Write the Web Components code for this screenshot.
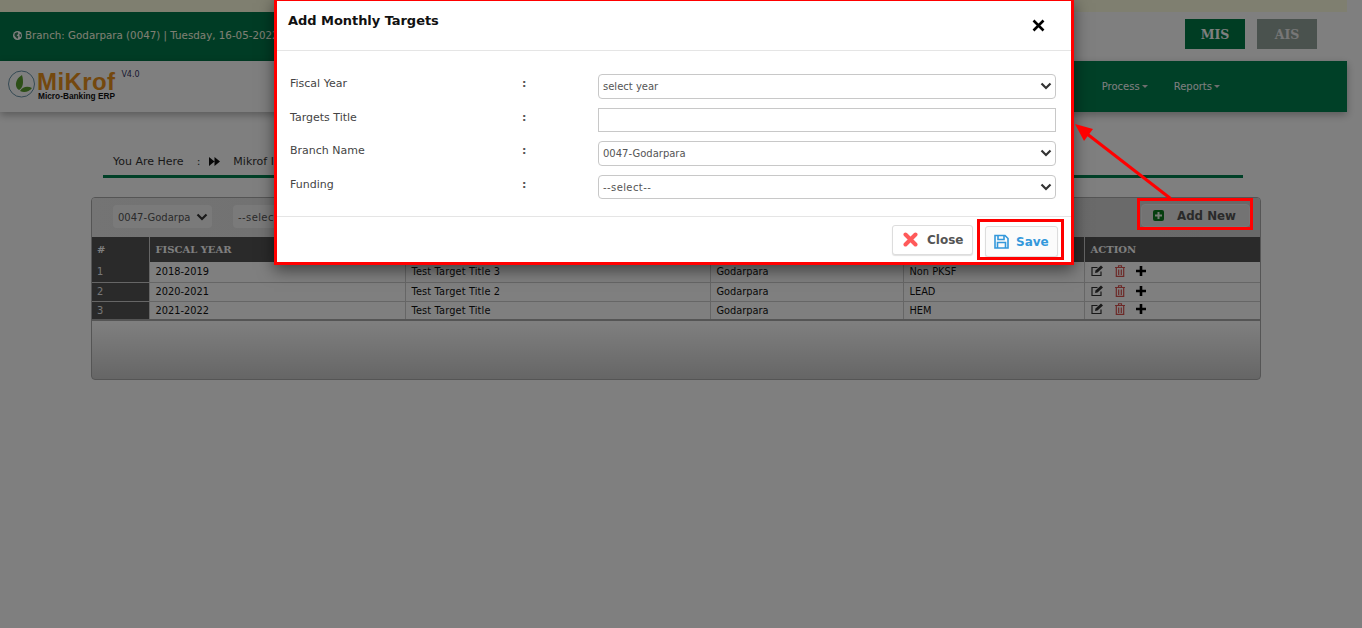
<!DOCTYPE html>
<html lang="en">
<head>
<meta charset="utf-8">
<title>Add Monthly Targets</title>
<style>
html,body{margin:0;padding:0;height:628px;overflow:hidden;background:#fff;font-family:"DejaVu Sans",Verdana,sans-serif;color:#333}
</style>
</head>
<body>
<mk-app></mk-app>

<template id="t-app">
<style>
:host{display:block;position:relative;width:1362px;height:628px;overflow:hidden}
main{display:flex;flex-direction:column;width:1347px}
.strip{height:12px;background:#ffffe0}
mk-breadcrumb{margin:39px 0 0 103px;width:1140px}
mk-panel{margin:19px 0 0 91px;width:1170px}
.veil{position:absolute;inset:0;background:rgba(0,0,0,.5)}
mk-modal{position:absolute;left:274px;top:-2px}
.mark{position:absolute;border:3px solid #f00;box-sizing:border-box;pointer-events:none}
.m1{left:1137px;top:198px;width:116px;height:32px}
.m2{left:977px;top:219px;width:87px;height:41px}
.arrow{position:absolute;left:1060px;top:110px}
</style>
<main>
  <div class="strip"></div>
  <mk-topbar></mk-topbar>
  <mk-nav></mk-nav>
  <mk-breadcrumb></mk-breadcrumb>
  <mk-panel></mk-panel>
</main>
<div class="veil"></div>
<mk-modal></mk-modal>
<svg class="arrow" width="130" height="92" viewBox="0 0 130 92" aria-hidden="true">
  <line x1="110.500" y1="88.500" x2="22" y2="20" stroke="#f00" stroke-width="3"/>
  <polygon points="15,14 33,19 24,31" fill="#f00"/>
</svg>
<div class="mark m1"></div>
<div class="mark m2"></div>
</template>

<template id="t-topbar">
<style>
:host{display:flex;justify-content:space-between;height:49px;background:#fff}
.info{width:420px;background:#00784a;display:flex;align-items:center;gap:3px;padding:0 0 2px 13px;box-sizing:border-box;font:10.300px/1 "DejaVu Sans",Verdana,sans-serif;white-space:nowrap;color:#ffffe6}
.btns{display:flex;gap:12px;padding:7px 30px 0 0}
.b{width:60px;height:30px;display:flex;align-items:center;justify-content:center;font:bold 12.500px "DejaVu Serif",Georgia,serif}
.mis{background:#007a47;color:#fff}
.ais{background:#95a59c;color:#eee}
svg{flex:none}
</style>
<div class="info">
<svg width="9" height="9" viewBox="0 0 10 10" aria-hidden="true"><circle cx="5" cy="5" r="5" fill="#fff"/><path d="M2 2.500 5 1 6 3 4 5 6 6 5 9 3 7 1.500 5ZM7 3 9 4 9 6 7.500 7Z" fill="#33805c"/></svg>
<span>Branch: Godarpara (0047) | Tuesday, 16-05-2022</span>
</div>
<div class="btns"><div class="b mis">MIS</div><div class="b ais">AIS</div></div>
</template>

<template id="t-nav">
<style>
:host{display:flex;justify-content:space-between;height:51px;background:#fff;box-shadow:0 3px 8px rgba(0,0,0,.3);position:relative}
.logo{display:flex;align-items:flex-start;padding:9px 0 0 8px;position:relative}
.words{margin-left:2px;display:flex;flex-direction:column}
.name{font:bold 24px/24px "Liberation Sans",Arial,sans-serif;color:#e8911c;letter-spacing:.4px}
.sub{font:bold 8.300px/8px "Liberation Sans",Arial,sans-serif;color:#111;margin:-2px 0 0 1px}
.ver{font:8px/10px "DejaVu Sans",Verdana,sans-serif;color:#336;margin:0 0 0 6px}
.menu{width:640px;background:#00804f;color:#fff;display:flex;justify-content:flex-end;align-items:center;gap:26px;padding-right:127px;box-sizing:border-box;font:10px "DejaVu Sans",Verdana,sans-serif}
.menu span{display:flex;align-items:center;gap:2px}
.menu i{display:block;width:0;height:0;border:3.500px solid transparent;border-top:3.500px solid #ddd;border-bottom:0}
</style>
<div class="logo">
  <svg width="27" height="28" viewBox="0 0 27 28" aria-hidden="true"><circle cx="13.500" cy="14" r="13" fill="#fff" stroke="#6a93a8" stroke-width="1"/><path d="M11 20C6 17 7 9 14 5 16 12 15 18 11 20Z" fill="#5b9e2e"/><path d="M12 21C15 16 20 16 24 18 21 22 16 23 12 21Z" fill="#5b9e2e"/></svg>
  <div class="words"><div class="name">MiKrof</div><div class="sub">Micro-Banking ERP</div></div>
  <div class="ver">V4.0</div>
</div>
<div class="menu"><span>Process<i></i></span><span>Reports<i></i></span></div>
</template>

<template id="t-breadcrumb">
<style>
:host{display:flex;align-items:center;height:27px;box-sizing:border-box;border-bottom:3px solid #00804f;padding:0 0 3px 10px;font:11px "DejaVu Sans",Verdana,sans-serif;color:#333;white-space:nowrap}
.c{margin:0 9px 0 13px}
svg{margin-right:13px}
</style>
<span>You Are Here</span><span class="c">:</span>
<svg width="11" height="9" viewBox="0 0 11 9" aria-hidden="true"><path d="M0 0 5.500 4.500 0 9ZM5.500 0 11 4.500 5.500 9Z" fill="#111"/></svg>
<span>Mikrof I</span>
</template>

<template id="t-panel">
<style>
:host{display:block;height:183px;box-sizing:border-box;border:1px solid #aaa;border-radius:4px;background:linear-gradient(#fff 0,#fff 124px,#ccc 100%);overflow:hidden;font-family:"DejaVu Sans",Verdana,sans-serif}
.tools{height:39px;box-sizing:border-box;background:linear-gradient(90deg,#e8e8e8,#d2d2d2);display:flex;align-items:flex-start;justify-content:space-between;padding:7px 10px 0 21px}
.l{display:flex;gap:21px}
.add{width:109px;height:23px;margin-top:-1px;box-sizing:border-box;border:1px solid #f0f0f0;border-radius:4px;background:#e6e6e6;display:flex;align-items:center;gap:13px;padding-left:11px;font:bold 11.800px "DejaVu Sans",Verdana,sans-serif;color:#555}
mk-select.a{width:99px;--bg:#f5f5f5;--bd:transparent;--h:23px;--gap:21px}
mk-select.b{width:120px;--bg:#f5f5f5;--bd:transparent;--h:23px}
table{border-collapse:collapse;table-layout:fixed;width:1168px;font-size:9.800px;color:#111}
th{height:25px;background:#555;color:#fff;text-align:left;padding:0 0 0 6px;font:bold 10px "DejaVu Serif",Georgia,serif;border:1px solid #ccc;border-top:0;border-bottom:0;box-sizing:border-box}
td{padding:0 0 0 6px;border:1px solid #ccc;box-sizing:border-box;height:19px;background:#fff}
tr:first-child td{height:20px}
td:first-child{background:#555;color:#eee}
td:nth-child(3){letter-spacing:.13px}
th:first-child,td:first-child{border-left:0;padding-left:5px}
th:last-child,td:last-child{border-right:0}
tbody tr:first-child td{border-top:0}
tbody tr:last-child td{border-bottom:2px solid #aaa}
.acts{display:flex;gap:11px;align-items:center;margin-top:-2px}
</style>
<div class="tools">
  <div class="l"><mk-select class="a">0047-Godarpara</mk-select><mk-select class="b" style="letter-spacing:.4px">--select--</mk-select></div>
  <div class="add"><svg width="11" height="11" viewBox="0 0 11 11" aria-hidden="true"><rect width="11" height="11" rx="2" fill="#0a7d1e"/><path d="M5.500 2v7M2 5.500h7" stroke="#e8f5e8" stroke-width="2"/></svg>Add New</div>
</div>
<table>
<colgroup><col style="width:57px"><col style="width:256px"><col style="width:305px"><col style="width:193px"><col style="width:181px"><col style="width:176px"></colgroup>
<thead><tr><th>#</th><th>FISCAL YEAR</th><th></th><th></th><th></th><th>ACTION</th></tr></thead>
<tbody id="rows"></tbody>
</table>
</template>

<template id="t-acts">
<svg width="13" height="12" viewBox="0 0 13 12" aria-hidden="true"><path d="M10 6.500V10.500H1V2.500H6.500" fill="none" stroke="#333" stroke-width="1.200"/><path d="M4 8 4.500 5.500 10 .5 12 2.500 6.500 7.500Z" fill="#333"/></svg>
<svg width="10" height="12" viewBox="0 0 10 12" aria-hidden="true"><path d="M0 2.500H10M3.500 2V.7H6.500V2" fill="none" stroke="#d9534f" stroke-width="1.100"/><path d="M1.300 3V11.400H8.700V3M3.700 4.500V10M6.300 4.500V10" fill="none" stroke="#d9534f" stroke-width="1.200"/></svg>
<svg width="10" height="10" viewBox="0 0 10 10" aria-hidden="true"><path d="M5 0V10M0 5H10" stroke="#000" stroke-width="2.600"/></svg>
</template>

<template id="t-select">
<style>
:host{display:block;box-sizing:border-box;height:var(--h,24.500px);background:var(--bg,#fff);border:1px solid var(--bd,#c8c8c8);border-radius:4px;font:10px "DejaVu Sans",Verdana,sans-serif;color:#555;position:relative;overflow:hidden}
.t{display:block;line-height:23px;padding-left:4px;white-space:nowrap;overflow:hidden;margin-right:var(--gap,24px)}
svg{position:absolute;right:3px;top:50%;margin-top:-4px}
</style>
<span class="t"><slot></slot></span>
<svg width="12" height="8" viewBox="0 0 12 8" aria-hidden="true"><path d="M1.500 1.500 6 6 10.500 1.500" fill="none" stroke="#333" stroke-width="2.200"/></svg>
</template>

<template id="t-modal">
<style>
:host{display:block;width:800px;box-sizing:border-box;border:3px solid #f00;background:#fff;box-shadow:0 5px 15px rgba(0,0,0,.5);font-family:"DejaVu Sans",Verdana,sans-serif;color:#444}
header{height:50px;box-sizing:border-box;border-bottom:1px solid #e5e5e5;display:flex;justify-content:space-between;padding:12px 26px 0 11px}
h1{margin:0;font:bold 13px/16px "DejaVu Sans",Verdana,sans-serif;color:#111;letter-spacing:-.05px}
header svg{margin-top:6px}
form{margin:0;display:grid;grid-template-columns:232px 76px 458px;grid-auto-rows:24.500px;row-gap:9px;padding:23px 0 16.500px 13px;border-bottom:1px solid #e5e5e5;font-size:11px}
form span{line-height:19px}
form span.c{font-weight:bold;color:#555}
.inp{box-sizing:border-box;height:24px;border:1px solid #c8c8c8}
footer{height:45.500px;box-sizing:border-box;display:flex;justify-content:flex-end;gap:12px;padding:8px 13px 0 0;align-items:flex-start}
.btn{box-sizing:border-box;height:30px;border:1px solid #ddd;border-radius:3px;background:#fff;box-shadow:0 1px 1px rgba(0,0,0,.12);display:flex;align-items:center;font:bold 12px "DejaVu Sans",Verdana,sans-serif}
.close{width:81px;gap:9px;padding-left:10px;color:#555}
.save{width:73px;height:31px;gap:7px;padding:1px 0 0 8px;color:#3498db;margin-top:1px;background:#fbfbfb}
</style>
<header>
  <h1>Add Monthly Targets</h1>
  <svg width="13" height="13" viewBox="0 0 13 13" aria-hidden="true"><path d="M1.500 1.500 11.500 11.500M11.500 1.500 1.500 11.500" stroke="#000" stroke-width="2.600"/></svg>
</header>
<form>
  <span>Fiscal Year</span><span class="c">:</span><mk-select>select year</mk-select>
  <span>Targets Title</span><span class="c">:</span><div class="inp"></div>
  <span>Branch Name</span><span class="c">:</span><mk-select>0047-Godarpara</mk-select>
  <span>Funding</span><span class="c">:</span><mk-select style="letter-spacing:.4px">--select--</mk-select>
</form>
<footer>
  <div class="btn close"><svg width="15" height="15" viewBox="0 0 15 15" aria-hidden="true"><path d="M2.500 2.500 12.500 12.500M12.500 2.500 2.500 12.500" stroke="#ff5a5a" stroke-width="4" stroke-linecap="round"/></svg>Close</div>
  <div class="btn save"><svg width="15" height="15" viewBox="0 0 15 15" aria-hidden="true"><path d="M1 1.500H11L14 4.500V14H1Z" fill="none" stroke="#3498db" stroke-width="1.600"/><path d="M4 1.500V5.500H10V1.500M3.500 14V8.500H11.500V14" fill="none" stroke="#3498db" stroke-width="1.600"/></svg>Save</div>
</footer>
</template>

<script>
function comp(name, tpl, init){
  customElements.define(name, class extends HTMLElement{
    constructor(){
      super();
      const r=this.attachShadow({mode:'open'});
      r.appendChild(document.getElementById(tpl).content.cloneNode(true));
      if(init) init(r);
    }
  });
}
comp('mk-select','t-select');
comp('mk-topbar','t-topbar');
comp('mk-nav','t-nav');
comp('mk-breadcrumb','t-breadcrumb');
comp('mk-modal','t-modal');
comp('mk-panel','t-panel',function(r){
  const data=[['1','2018-2019','Test Target Title 3','Godarpara','Non PKSF'],['2','2020-2021','Test Target Title 2','Godarpara','LEAD'],['3','2021-2022','Test Target Title','Godarpara','HEM']];
  const body=r.getElementById('rows');
  data.forEach(function(d){
    const tr=document.createElement('tr');
    d.forEach(function(v){const td=document.createElement('td');td.textContent=v;tr.appendChild(td);});
    const td=document.createElement('td');
    const a=document.createElement('div');a.className='acts';
    a.appendChild(document.getElementById('t-acts').content.cloneNode(true));
    td.appendChild(a);tr.appendChild(td);body.appendChild(tr);
  });
});
comp('mk-app','t-app');
</script>
</body>
</html>
